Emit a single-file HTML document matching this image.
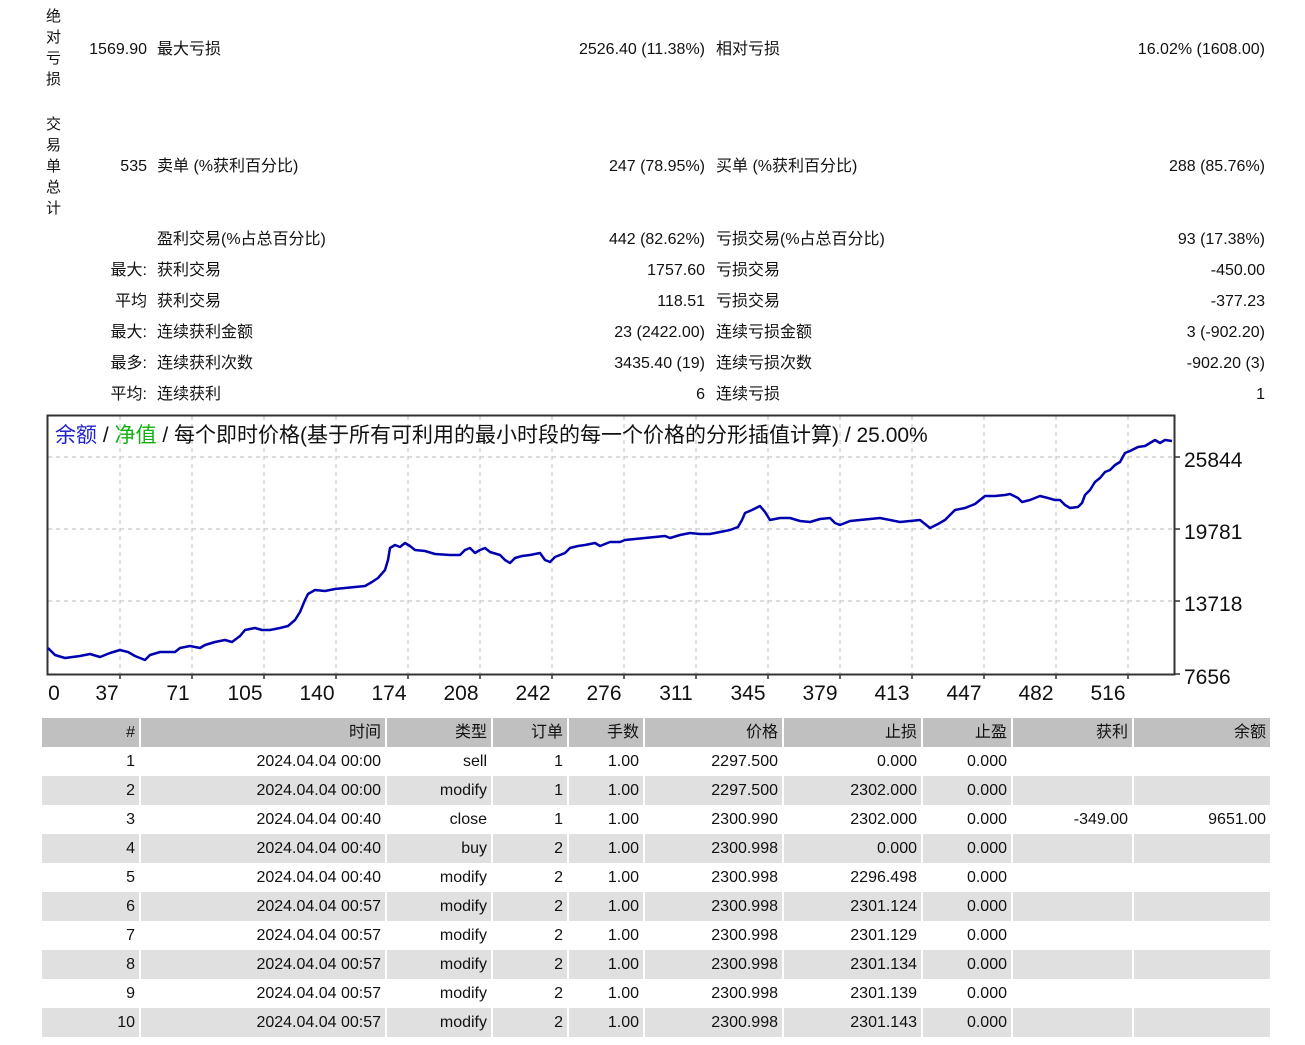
<!DOCTYPE html>
<html><head><meta charset="utf-8"><style>
html,body{margin:0;padding:0;background:#fff;width:1305px;height:1045px;overflow:hidden}
body{font-family:"Liberation Sans","Noto Sans CJK SC",sans-serif;font-size:16px;color:#111;position:relative}
.a{position:absolute;white-space:nowrap;line-height:20px}
.r{text-align:right}
.v{position:absolute;left:46px;width:18px;font-size:15px;line-height:21px}
table{position:absolute;left:42px;top:718px;border-collapse:collapse;font-size:16px}
td{height:29px;padding:0 4px 0 0;text-align:right;border-left:2px solid #fff;box-sizing:border-box;line-height:29px}
td:first-child{border-left:none}
tr.h td{background:#c0c0c0;height:29px}
tr.g td{background:#e0e0e0}
</style></head><body>
<div class="v" style="top:6px">绝<br>对<br>亏<br>损</div>
<div class="v" style="top:114px">交<br>易<br>单<br>总<br>计</div>

<div class="a r" style="right:1158px;top:40px">1569.90</div>
<div class="a" style="left:157px;top:40px">最大亏损</div>
<div class="a r" style="right:600px;top:40px">2526.40 (11.38%)</div>
<div class="a" style="left:716px;top:40px">相对亏损</div>
<div class="a r" style="right:40px;top:40px">16.02% (1608.00)</div>

<div class="a r" style="right:1158px;top:157px">535</div>
<div class="a" style="left:157px;top:157px">卖单 (%获利百分比)</div>
<div class="a r" style="right:600px;top:157px">247 (78.95%)</div>
<div class="a" style="left:716px;top:157px">买单 (%获利百分比)</div>
<div class="a r" style="right:40px;top:157px">288 (85.76%)</div>

<div class="a" style="left:157px;top:230px">盈利交易(%占总百分比)</div>
<div class="a r" style="right:600px;top:230px">442 (82.62%)</div>
<div class="a" style="left:716px;top:230px">亏损交易(%占总百分比)</div>
<div class="a r" style="right:40px;top:230px">93 (17.38%)</div>

<div class="a r" style="right:1158px;top:261px">最大:</div>
<div class="a" style="left:157px;top:261px">获利交易</div>
<div class="a r" style="right:600px;top:261px">1757.60</div>
<div class="a" style="left:716px;top:261px">亏损交易</div>
<div class="a r" style="right:40px;top:261px">-450.00</div>

<div class="a r" style="right:1158px;top:292px">平均</div>
<div class="a" style="left:157px;top:292px">获利交易</div>
<div class="a r" style="right:600px;top:292px">118.51</div>
<div class="a" style="left:716px;top:292px">亏损交易</div>
<div class="a r" style="right:40px;top:292px">-377.23</div>

<div class="a r" style="right:1158px;top:323px">最大:</div>
<div class="a" style="left:157px;top:323px">连续获利金额</div>
<div class="a r" style="right:600px;top:323px">23 (2422.00)</div>
<div class="a" style="left:716px;top:323px">连续亏损金额</div>
<div class="a r" style="right:40px;top:323px">3 (-902.20)</div>

<div class="a r" style="right:1158px;top:354px">最多:</div>
<div class="a" style="left:157px;top:354px">连续获利次数</div>
<div class="a r" style="right:600px;top:354px">3435.40 (19)</div>
<div class="a" style="left:716px;top:354px">连续亏损次数</div>
<div class="a r" style="right:40px;top:354px">-902.20 (3)</div>

<div class="a r" style="right:1158px;top:385px">平均:</div>
<div class="a" style="left:157px;top:385px">连续获利</div>
<div class="a r" style="right:600px;top:385px">6</div>
<div class="a" style="left:716px;top:385px">连续亏损</div>
<div class="a r" style="right:40px;top:385px">1</div>

<svg style="position:absolute;left:0;top:0" width="1305" height="715">
<g stroke="#c8c8c8" stroke-dasharray="4,4" stroke-width="1.2">
<line x1="48" x2="1174" y1="457" y2="457"/><line x1="48" x2="1174" y1="529" y2="529"/><line x1="48" x2="1174" y1="601" y2="601"/>
<line x1="120" x2="120" y1="416" y2="674"/><line x1="192" x2="192" y1="416" y2="674"/><line x1="264" x2="264" y1="416" y2="674"/><line x1="336" x2="336" y1="416" y2="674"/><line x1="408" x2="408" y1="416" y2="674"/><line x1="480" x2="480" y1="416" y2="674"/><line x1="552" x2="552" y1="416" y2="674"/><line x1="624" x2="624" y1="416" y2="674"/><line x1="696" x2="696" y1="416" y2="674"/><line x1="768" x2="768" y1="416" y2="674"/><line x1="840" x2="840" y1="416" y2="674"/><line x1="912" x2="912" y1="416" y2="674"/><line x1="984" x2="984" y1="416" y2="674"/><line x1="1056" x2="1056" y1="416" y2="674"/><line x1="1128" x2="1128" y1="416" y2="674"/>
</g>
<rect x="47.5" y="415.5" width="1127" height="259" fill="none" stroke="#333" stroke-width="2"/>
<g stroke="#333" stroke-width="1.5">
<line x1="1174" x2="1180" y1="457" y2="457"/><line x1="1174" x2="1180" y1="529" y2="529"/><line x1="1174" x2="1180" y1="601" y2="601"/><line x1="1174" x2="1180" y1="674" y2="674"/>
<line x1="120" x2="120" y1="674" y2="679"/><line x1="192" x2="192" y1="674" y2="679"/><line x1="264" x2="264" y1="674" y2="679"/><line x1="336" x2="336" y1="674" y2="679"/><line x1="408" x2="408" y1="674" y2="679"/><line x1="480" x2="480" y1="674" y2="679"/><line x1="552" x2="552" y1="674" y2="679"/><line x1="624" x2="624" y1="674" y2="679"/><line x1="696" x2="696" y1="674" y2="679"/><line x1="768" x2="768" y1="674" y2="679"/><line x1="840" x2="840" y1="674" y2="679"/><line x1="912" x2="912" y1="674" y2="679"/><line x1="984" x2="984" y1="674" y2="679"/><line x1="1056" x2="1056" y1="674" y2="679"/><line x1="1128" x2="1128" y1="674" y2="679"/>
</g>
<polyline fill="none" stroke="#0000b0" stroke-width="2.5" stroke-linejoin="round" points="48,648 55,655 65,658 80,656 90,654 100,657 110,653 120,650 128,652 135,656 145,660 150,655 160,652 175,652 180,648 190,646 200,648 205,645 215,642 225,640 232,642 240,636 245,630 255,628 262,630 270,630 280,628 288,626 295,620 300,612 305,600 308,594 315,590 325,591 335,589 345,588 355,587 365,586 372,582 378,578 385,570 388,560 390,548 395,545 400,547 405,543 410,546 415,550 425,551 435,554 450,555 460,555 465,550 470,548 475,553 480,550 485,548 490,552 500,555 505,560 510,563 515,558 522,556 530,555 540,553 545,560 550,562 555,557 565,553 570,548 578,546 585,545 595,543 600,546 610,542 620,542 625,540 635,539 645,538 655,537 665,536 670,538 680,535 690,533 700,534 710,534 720,532 730,530 738,527 742,520 745,513 752,510 760,506 765,512 770,520 780,518 790,518 800,521 810,522 820,519 830,518 835,523 840,525 850,521 860,520 870,519 880,518 890,520 900,522 910,521 920,520 925,524 930,528 938,524 945,520 950,515 955,510 965,508 975,504 980,500 985,496 995,496 1005,495 1010,494 1018,498 1022,502 1030,500 1040,496 1048,498 1055,500 1060,500 1065,505 1070,508 1078,507 1082,503 1085,495 1090,490 1095,482 1100,478 1105,472 1110,470 1115,465 1120,462 1125,453 1130,451 1138,447 1145,446 1150,443 1155,440 1160,443 1165,440 1172,441"/>
<g font-family="Liberation Sans, Noto Sans CJK SC, sans-serif" font-size="21" fill="#111">
<text x="55" y="442"><tspan fill="#2222cc">余额</tspan> / <tspan fill="#10b010">净值</tspan> / 每个即时价格(基于所有可利用的最小时段的每一个价格的分形插值计算) / 25.00%</text>
<text x="1184" y="467">25844</text><text x="1184" y="539">19781</text><text x="1184" y="611">13718</text><text x="1184" y="684">7656</text>
<g text-anchor="middle">
<text x="54" y="700">0</text><text x="107" y="700">37</text><text x="178" y="700">71</text><text x="245" y="700">105</text><text x="317" y="700">140</text><text x="389" y="700">174</text><text x="461" y="700">208</text><text x="533" y="700">242</text><text x="604" y="700">276</text><text x="676" y="700">311</text><text x="748" y="700">345</text><text x="820" y="700">379</text><text x="892" y="700">413</text><text x="964" y="700">447</text><text x="1036" y="700">482</text><text x="1108" y="700">516</text>
</g></g>
</svg>

<table>
<colgroup><col style="width:98px"><col style="width:246px"><col style="width:106px"><col style="width:76px"><col style="width:76px"><col style="width:139px"><col style="width:139px"><col style="width:90px"><col style="width:121px"><col style="width:137px"></colgroup>
<tr class="h"><td>#</td><td>时间</td><td>类型</td><td>订单</td><td>手数</td><td>价格</td><td>止损</td><td>止盈</td><td>获利</td><td>余额</td></tr>
<tr><td>1</td><td>2024.04.04 00:00</td><td>sell</td><td>1</td><td>1.00</td><td>2297.500</td><td>0.000</td><td>0.000</td><td></td><td></td></tr>
<tr class="g"><td>2</td><td>2024.04.04 00:00</td><td>modify</td><td>1</td><td>1.00</td><td>2297.500</td><td>2302.000</td><td>0.000</td><td></td><td></td></tr>
<tr><td>3</td><td>2024.04.04 00:40</td><td>close</td><td>1</td><td>1.00</td><td>2300.990</td><td>2302.000</td><td>0.000</td><td>-349.00</td><td>9651.00</td></tr>
<tr class="g"><td>4</td><td>2024.04.04 00:40</td><td>buy</td><td>2</td><td>1.00</td><td>2300.998</td><td>0.000</td><td>0.000</td><td></td><td></td></tr>
<tr><td>5</td><td>2024.04.04 00:40</td><td>modify</td><td>2</td><td>1.00</td><td>2300.998</td><td>2296.498</td><td>0.000</td><td></td><td></td></tr>
<tr class="g"><td>6</td><td>2024.04.04 00:57</td><td>modify</td><td>2</td><td>1.00</td><td>2300.998</td><td>2301.124</td><td>0.000</td><td></td><td></td></tr>
<tr><td>7</td><td>2024.04.04 00:57</td><td>modify</td><td>2</td><td>1.00</td><td>2300.998</td><td>2301.129</td><td>0.000</td><td></td><td></td></tr>
<tr class="g"><td>8</td><td>2024.04.04 00:57</td><td>modify</td><td>2</td><td>1.00</td><td>2300.998</td><td>2301.134</td><td>0.000</td><td></td><td></td></tr>
<tr><td>9</td><td>2024.04.04 00:57</td><td>modify</td><td>2</td><td>1.00</td><td>2300.998</td><td>2301.139</td><td>0.000</td><td></td><td></td></tr>
<tr class="g"><td>10</td><td>2024.04.04 00:57</td><td>modify</td><td>2</td><td>1.00</td><td>2300.998</td><td>2301.143</td><td>0.000</td><td></td><td></td></tr>
</table>
</body></html>
